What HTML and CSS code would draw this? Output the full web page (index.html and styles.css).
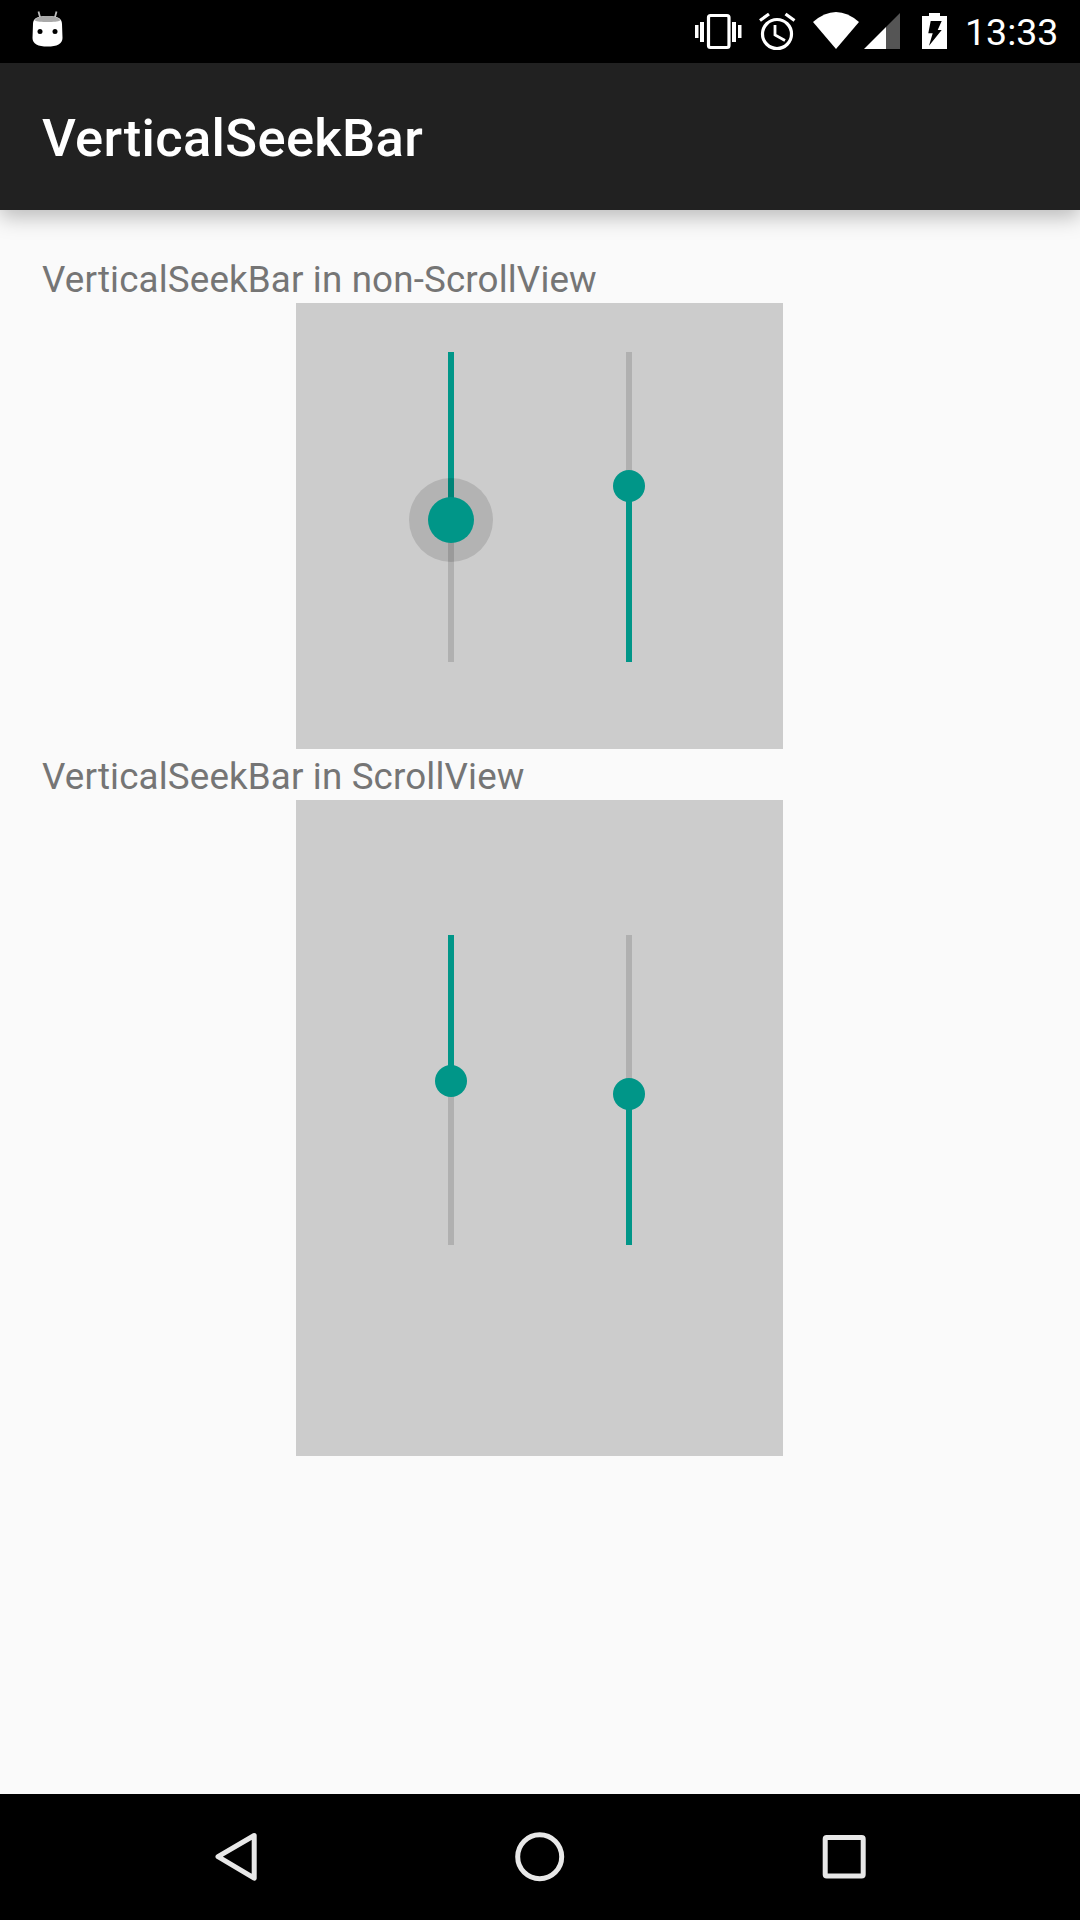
FILE: index.html
```html
<!DOCTYPE html>
<html lang="en">
<head>
<meta charset="utf-8">
<title>VerticalSeekBar</title>
<link rel="stylesheet" href="styles.css">
</head>
<body>
<div class="screen">
  <header class="status">
    <svg class="notif" viewBox="0 0 90 63" width="90" height="63">
      <path class="ico-line" d="M38.500 11.500 L40.500 19 M56.500 11.500 L54.500 19"/>
      <path class="ico-fill" d="M33 24 C33 18 38 16 47.500 16 C57 16 62 18 62 24 L62.500 38 C62.500 44 57 46.500 47.500 46.500 C38 46.500 32.500 44 32.500 38 Z"/>
      <path class="ico-grey" d="M34.500 20.500 C36 17.500 40 16 47.500 16 C55 16 59 17.500 60.500 20.500 C56 22.500 39 22.500 34.500 20.500 Z"/>
      <circle class="ico-black" cx="40" cy="31.500" r="2.500"/>
      <circle class="ico-black" cx="55" cy="31.500" r="2.500"/>
    </svg>
    <div class="status-right">
      <svg viewBox="690 0 60 63" width="60" height="63">
        <path class="ico-fill" d="M695 25h3.500v13h-3.500z M700 22h4v20h-4z M732 22h4v20h-4z M738 25h3.500v13h-3.500z"/>
        <rect class="ico-stroke" x="708.500" y="15.500" width="20.500" height="32" rx="2"/>
      </svg>
      <svg viewBox="750 0 52 63" width="52" height="63">
        <circle class="ico-stroke" cx="777" cy="34" r="14.500"/>
        <path class="ico-stroke" d="M760 20.500 L769 14 M785.500 14 L794.500 20.500"/>
        <path class="ico-stroke thin" d="M775 25 V35 L785 40.500"/>
      </svg>
      <svg viewBox="802 0 60 63" width="60" height="63">
        <path class="ico-fill" d="M813 22 Q836 2 859 22 L836 49 Z"/>
      </svg>
      <svg viewBox="862 0 48 63" width="48" height="63">
        <path class="ico-dim" d="M886 27 L900 13 V49 H886 Z"/>
        <path class="ico-fill" d="M864 49 L886 27 V49 Z"/>
      </svg>
      <svg viewBox="910 0 48 63" width="48" height="63">
        <path class="ico-fill" d="M929 13 H940 V16 H947 V49 H922 V16 H929 Z"/>
        <path class="ico-black" d="M930.700 21 H941.700 L937.700 30 H941.700 L929 45.700 L932.700 33.300 H928.300 Z"/>
      </svg>
      <span class="time">13:33</span>
    </div>
  </header>

  <div class="appbar">
    <h1 class="title">VerticalSeekBar</h1>
  </div>

  <main class="content">
    <p class="label">VerticalSeekBar in non-ScrollView</p>
    <section class="panel panel-plain">
      <div class="seekbar">
        <div class="seg on" style="height:168px"></div>
        <div class="seg off"></div>
        <div class="halo" style="top:168px"></div>
        <div class="thumb pressed" style="top:168px"></div>
      </div>
      <div class="seekbar">
        <div class="seg off" style="height:134px"></div>
        <div class="seg on"></div>
        <div class="thumb" style="top:134px"></div>
      </div>
    </section>

    <p class="label second">VerticalSeekBar in ScrollView</p>
    <section class="panel panel-scroll">
      <div class="seekbar">
        <div class="seg on" style="height:146px"></div>
        <div class="seg off"></div>
        <div class="thumb" style="top:146px"></div>
      </div>
      <div class="seekbar">
        <div class="seg off" style="height:159px"></div>
        <div class="seg on"></div>
        <div class="thumb" style="top:159px"></div>
      </div>
    </section>
  </main>

  <nav class="navbar">
    <svg viewBox="200 1820 70 70" width="70" height="70">
      <path class="nav-line" d="M254.200 1835.500 L218 1856.700 L254.200 1878.200 Z"/>
    </svg>
    <svg viewBox="505 1820 70 70" width="70" height="70">
      <circle class="nav-line" cx="539.700" cy="1856.700" r="22"/>
    </svg>
    <svg viewBox="810 1820 70 70" width="70" height="70">
      <rect class="nav-line" x="825.200" y="1837.500" width="38" height="38.500" rx="1.500"/>
    </svg>
  </nav>
</div>
</body>
</html>
```

FILE: styles.css
```css
* { box-sizing: border-box; }

html, body { margin: 0; padding: 0; }

body {
  width: 1080px;
  height: 1920px;
  overflow: hidden;
  font-family: Roboto, "Noto Sans", sans-serif;
  background: #fafafa;
}

.screen {
  display: flex;
  flex-direction: column;
  width: 1080px;
  height: 1920px;
}

/* status bar */
.status {
  display: flex;
  align-items: center;
  flex: 0 0 63px;
  background: #000;
}

.status svg { display: block; flex: none; }

.status-right {
  display: flex;
  align-items: center;
  margin-left: 600px;
}

.time {
  margin-left: 7px;
  color: #fff;
  font-size: 37.500px;
  line-height: 62px;
}

.ico-fill { fill: #fff; }
.ico-black { fill: #000; }
.ico-grey { fill: #a9a9a9; }
.ico-dim { fill: #555; }
.ico-stroke { fill: none; stroke: #fff; stroke-width: 3.200; }
.ico-stroke.thin { stroke-width: 2.800; }
.ico-line { fill: none; stroke: #bdbdbd; stroke-width: 1.800; }

/* app bar */
.appbar {
  position: relative;
  z-index: 1;
  display: flex;
  align-items: center;
  flex: 0 0 147px;
  padding: 2px 0 0 42px;
  background: #212121;
  box-shadow: 0 7px 20px rgba(0, 0, 0, 0.26);
}

.title {
  margin: 0;
  color: #fff;
  font-size: 52.500px;
  font-weight: 500;
  line-height: 64px;
  letter-spacing: 0.330px;
}

/* content */
.content {
  flex: 1;
  padding-top: 48px;
}

.label {
  margin: 0;
  padding-left: 42px;
  color: #757575;
  font-size: 36.750px;
  line-height: 43px;
  letter-spacing: 0.150px;
}

.label.second { margin-top: 6px; }

.panel {
  display: flex;
  gap: 172px;
  width: 487px;
  margin-left: 296px;
  padding-left: 152px;
  background: #ccc;
}

.panel-plain { height: 446px; margin-top: 2px; padding-top: 49px; }
.panel-scroll { height: 656px; margin-top: 2px; padding-top: 135px; }

.seekbar {
  position: relative;
  display: flex;
  flex-direction: column;
  width: 6px;
  height: 310px;
}

.seg { flex: none; }
.seg + .seg { flex: 1; }
.seg.on { background: #009688; }
.seg.off { background: #b0b0b0; }

.thumb {
  position: absolute;
  left: 3px;
  width: 32px;
  height: 32px;
  border-radius: 50%;
  background: #009688;
  transform: translate(-50%, -50%);
}

.thumb.pressed { width: 46px; height: 46px; }

.halo {
  position: absolute;
  left: 3px;
  width: 84px;
  height: 84px;
  border-radius: 50%;
  background: rgba(0, 0, 0, 0.12);
  transform: translate(-50%, -50%);
}

/* navigation bar */
.navbar {
  display: flex;
  align-items: flex-start;
  gap: 235px;
  flex: 0 0 126px;
  padding: 26px 0 0 200px;
  background: #000;
}

.navbar svg { display: block; flex: none; }

.nav-line {
  fill: none;
  stroke: #e8e8e8;
  stroke-width: 5;
  stroke-linejoin: round;
}
```
